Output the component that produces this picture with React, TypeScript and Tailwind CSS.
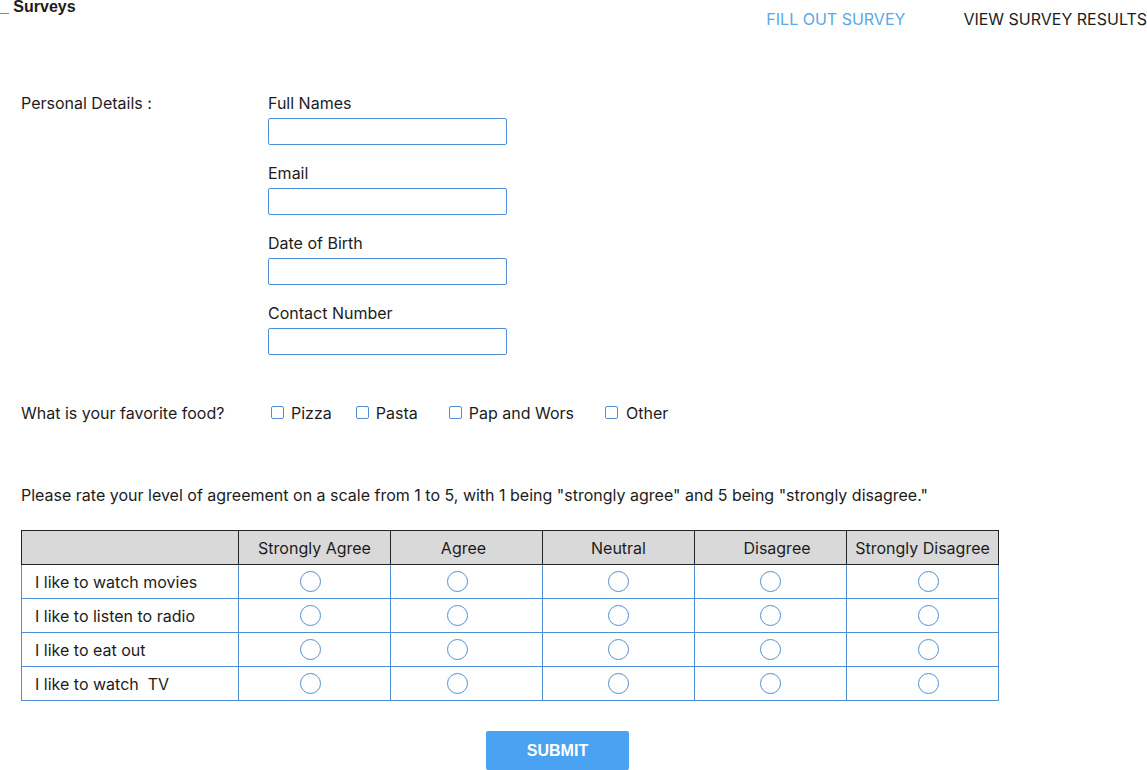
import React from "react";

const fields = ["Full Names", "Email", "Date of Birth", "Contact Number"];

const foods = [
  { label: "Pizza", ml: "ml-[3px]", gap: "ml-[7px]" },
  { label: "Pasta", ml: "ml-[24px]", gap: "ml-[7px]" },
  { label: "Pap and Wors", ml: "ml-[31px]", gap: "ml-[7px]" },
  { label: "Other", ml: "ml-[31px]", gap: "ml-[8px]" },
];

// small per-column nudges so headers and radios sit where the mockup has them
const scale = [
  { label: "Strongly Agree", head: "", dot: "pr-[9px]" },
  { label: "Agree", head: "pr-[6px]", dot: "pr-[19px]" },
  { label: "Neutral", head: "", dot: "" },
  { label: "Disagree", head: "pl-[13px]", dot: "" },
  { label: "Strongly Disagree", head: "", dot: "pl-[11px]" },
];

const statements = [
  "I like to watch movies",
  "I like to listen to radio",
  "I like to eat out",
  "I like to watch  TV",
];

export default function App() {
  return (
    <div className="min-h-screen bg-white font-['Inter',sans-serif] text-[16px] text-[#1c1c1c]">
      {/* Top bar */}
      <header className="flex justify-between h-[38px]">
        <div className="font-['Liberation_Sans',sans-serif] font-bold text-[16px] leading-[16px] -mt-[1px] whitespace-pre">
          _ Surveys
        </div>
        <nav className="flex gap-[58px] pt-[9px] leading-[20px] whitespace-nowrap">
          <a className="text-[#5aa7e8] cursor-pointer">FILL OUT SURVEY</a>
          <a className="text-[#1c1c1c] cursor-pointer">VIEW SURVEY RESULTS</a>
        </nav>
      </header>

      <main className="px-[21px]">
        {/* Personal details */}
        <section className="flex pt-[55px] leading-[20px]">
          <div className="w-[247px]">Personal Details :</div>
          <div className="flex flex-col">
            {fields.map((f) => (
              <div key={f} className="flex flex-col mb-[18px]">
                <label>{f}</label>
                <input className="mt-[5px] w-[239px] h-[27px] border border-[#4f8fd6] rounded-[2px] outline-none px-2" />
              </div>
            ))}
          </div>
        </section>

        {/* Favorite food */}
        <section className="flex items-center mt-[30px] leading-[20px]">
          <div className="w-[247px]">What is your favorite food?</div>
          <div className="flex items-center">
            {foods.map((f) => (
              <label key={f.label} className={`flex items-center ${f.ml}`}>
                <span className="w-[13px] h-[13px] border border-[#4f8fd6] rounded-[2px] -mt-[2px]" />
                <span className={f.gap}>{f.label}</span>
              </label>
            ))}
          </div>
        </section>

        <p className="mt-[62px] leading-[20px]">
          Please rate your level of agreement on a scale from 1 to 5, with 1 being "strongly agree" and 5 being "strongly disagree."
        </p>

        {/* Rating table */}
        <table className="mt-[25px] border-collapse table-fixed w-[977px]">
          <thead>
            <tr className="h-[34px] bg-[#d9d9d9]">
              <th className="w-[217px] border border-[#222] font-normal" />
              {scale.map((s) => (
                <th key={s.label} className={`w-[152px] border border-[#222] font-normal text-center ${s.head}`}>
                  {s.label}
                </th>
              ))}
            </tr>
          </thead>
          <tbody>
            {statements.map((s) => (
              <tr key={s} className="h-[34px]">
                <td className="border border-[#4f8fd6] pl-[13px] whitespace-pre">{s}</td>
                {scale.map((c) => (
                  <td key={c.label} className={`border border-[#4f8fd6] ${c.dot}`}>
                    <div className="flex justify-center">
                      <span className="w-[21px] h-[21px] rounded-full border border-[#4f8fd6]" />
                    </div>
                  </td>
                ))}
              </tr>
            ))}
          </tbody>
        </table>

        <button className="mt-[30px] ml-[465px] w-[143px] h-[39px] bg-[#4aa3f2] rounded-[2px] text-white font-['Liberation_Sans',sans-serif] font-bold text-[16px]">
          SUBMIT
        </button>
      </main>
    </div>
  );
}
